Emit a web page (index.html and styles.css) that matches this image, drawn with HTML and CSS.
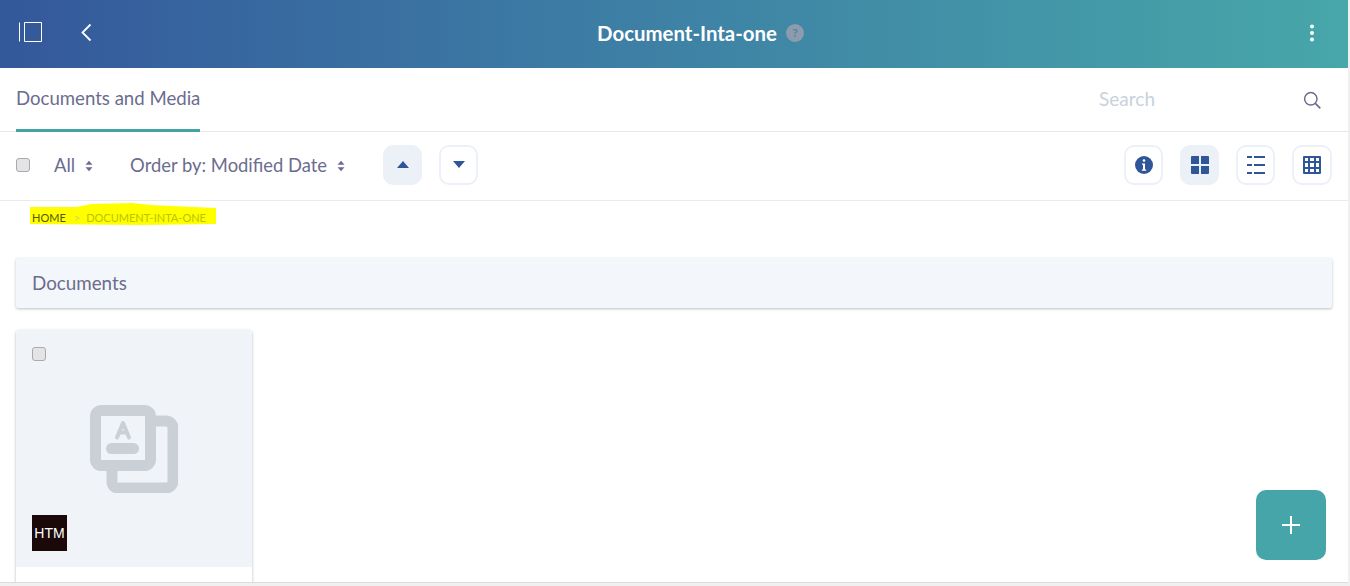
FILE: index.html
```html
<!DOCTYPE html>
<html lang="en">
<head>
<meta charset="utf-8">
<title>Document-Inta-one</title>
<link rel="stylesheet" href="styles.css">
</head>
<body>
<div class="page">
  <header class="topbar">
    <div class="topbar-left">
      <svg class="icon-panel" width="24" height="20" viewBox="0 0 24 20"><path d="M1.500 .5v19M6.500 .5h17v19h-17z" fill="none" stroke="#fff" stroke-width="1"/></svg>
      <svg class="icon-back" width="12" height="20" viewBox="0 0 12 20"><path d="M10.500 1.500 2.500 9.500l8 8" fill="none" stroke="#fff" stroke-width="1.800"/></svg>
    </div>
    <div class="topbar-title">
      <span class="title-text">Document-Inta-one</span>
      <span class="help">?</span>
    </div>
    <div class="topbar-right">
      <svg class="icon-more" width="6" height="18" viewBox="0 0 6 18"><circle cx="3" cy="2.500" r="2" fill="#fff"/><circle cx="3" cy="9" r="2" fill="#fff"/><circle cx="3" cy="15.500" r="2" fill="#fff"/></svg>
    </div>
  </header>

  <nav class="tabs">
    <a class="tab">Documents and Media</a>
    <div class="search">
      <span class="search-text">Search</span>
      <svg width="18" height="18" viewBox="0 0 18 18"><circle cx="7.800" cy="7.800" r="6.200" fill="none" stroke="#6b6c8e" stroke-width="1.500"/><path d="M12.300 12.300 17.300 17.300" stroke="#6b6c8e" stroke-width="1.700"/></svg>
    </div>
  </nav>

  <div class="toolbar">
    <input class="check" type="checkbox">
    <span class="select-label all">All<svg class="sort" width="8" height="12" viewBox="0 0 8 12"><path d="M4 .8 7.500 4.800H.5zM4 11.200.5 7.200h7z" fill="#6b6c8e"/></svg></span>
    <span class="select-label order">Order by: Modified Date<svg class="sort" width="8" height="12" viewBox="0 0 8 12"><path d="M4 .8 7.500 4.800H.5zM4 11.200.5 7.200h7z" fill="#6b6c8e"/></svg></span>
    <div class="btn active"><svg width="12" height="7" viewBox="0 0 12 7"><path d="M6 0 12 7H0z" fill="#30569a"/></svg></div>
    <div class="btn"><svg width="12" height="7" viewBox="0 0 12 7"><path d="M6 7 0 0h12z" fill="#30569a"/></svg></div>
    <div class="toolbar-right">
      <div class="btn"><svg width="18" height="18" viewBox="0 0 18 18"><circle cx="9" cy="9" r="9" fill="#30569a"/><circle cx="9" cy="4.500" r="1.300" fill="#fff"/><path d="M7 7.500h3v6h1.200v1.200H6.800v-1.200H8V8.700H7z" fill="#fff"/></svg></div>
      <div class="btn active"><svg width="18" height="18" viewBox="0 0 18 18"><path d="M0 1a1 1 0 0 1 1-1h7v8H0zM10 0h7a1 1 0 0 1 1 1v7h-8zM0 10h8v8H1a1 1 0 0 1-1-1zM10 10h8v7a1 1 0 0 1-1 1h-7z" fill="#30569a"/></svg></div>
      <div class="btn"><svg width="18" height="18" viewBox="0 0 18 18"><path d="M0 0h5v2H0zM7 0h11v2H7zM0 8h5v2H0zM7 8h11v2H7zM0 16h5v2H0zM7 16h11v2H7z" fill="#30569a"/></svg></div>
      <div class="btn btn-wide"><svg width="18" height="18" viewBox="0 0 18 18"><path fill-rule="evenodd" d="M1 0h16a1 1 0 0 1 1 1v16a1 1 0 0 1-1 1H1a1 1 0 0 1-1-1V1a1 1 0 0 1 1-1zM2 2v3h3V2zM7 2v3h4V2zM13 2v3h3V2zM2 7v4h3V7zM7 7v4h4V7zM13 7v4h3V7zM2 13v3h3v-3zM7 13v3h4v-3zM13 13v3h3v-3z" fill="#30569a"/></svg></div>
    </div>
  </div>

  <div class="crumbs">
    <span class="crumb-mark"><span class="crumb-home">HOME</span><span class="crumb-sep">&gt;</span><span class="crumb-cur">DOCUMENT-INTA-ONE</span></span>
  </div>

  <main class="content">
    <div class="section">Documents</div>
    <article class="card">
      <div class="thumb">
        <input class="check" type="checkbox">
        <svg class="doc-icon" width="88" height="88" viewBox="0 0 88 88">
          <path d="M66 16h10a7 7 0 0 1 7 7v53a7 7 0 0 1-7 7H28a6 6 0 0 1-6-6V60" fill="none" stroke="#cbd0d7" stroke-width="11"/>
          <rect x="5.500" y="5.500" width="55" height="55" rx="6" fill="none" stroke="#cbd0d7" stroke-width="11"/>
          <rect x="16" y="38" width="33" height="11" rx="5.500" fill="#cbd0d7"/>
          <path d="M27 32.500 33 18l6 14.500M29.500 27.500h7" fill="none" stroke="#cbd0d7" stroke-width="4" stroke-linecap="round" stroke-linejoin="round"/>
        </svg>
        <div class="badge"><span>HTM</span></div>
      </div>
    </article>
  </main>

  <button class="fab" type="button"><svg width="18" height="18" viewBox="0 0 18 18"><path d="M9 0v18M0 9h18" stroke="#fff" stroke-width="2"/></svg></button>
</div>
</body>
</html>
```
FILE: styles.css
```css
* { box-sizing: border-box; }
html, body { margin: 0; height: 100%; overflow: hidden; }
body {
  background: #f0f0f0;
  font-family: "Lato", "Open Sans", sans-serif;
  color: #6b6c8e;
}
.page {
  position: relative;
  width: 1348px;
  height: 583px;
  background: #fff;
  border-bottom: 1px solid #dcdcdc;
  overflow: hidden;
}
.topbar {
  height: 68px;
  display: grid;
  grid-template-columns: 1fr auto 1fr;
  align-items: center;
  padding: 0 33px 0 18px;
  background: linear-gradient(90deg, #34589b 0%, #3c7aa4 40%, #47a7a9 100%);
  color: #fff;
}
.topbar-left { display: flex; align-items: center; gap: 38px; }
.topbar-left svg { display: block; }
.icon-panel { margin-top: -4px; }
.icon-back { margin-top: -3px; }
.topbar-title {
  display: flex;
  align-items: center;
  gap: 9px;
  margin-top: -3px;
  padding-left: 68px;
}
.title-text { font-size: 20.400px; font-weight: 700; }
.help {
  width: 18px;
  height: 18px;
  border-radius: 50%;
  background: #8c9cad;
  color: #4e87a4;
  font-size: 12px;
  font-weight: 700;
  display: flex;
  align-items: center;
  justify-content: center;
}
.topbar-right { display: flex; justify-content: flex-end; }
.icon-more { display: block; margin-top: -3px; }
.tabs {
  height: 64px;
  display: flex;
  justify-content: space-between;
  padding: 0 27px 0 16px;
  border-bottom: 1px solid #e6e8ec;
}
.tab {
  height: 64px;
  font-size: 18.600px;
  line-height: 60px;
  border-bottom: 3px solid #45a3a8;
  white-space: nowrap;
}
.search { display: flex; align-items: center; gap: 148px; margin-top: -2px; }
.search-text { font-size: 19px; color: #c6d2de; }
.search svg { display: block; margin-top: 3px; }
.toolbar {
  height: 69px;
  display: flex;
  align-items: center;
  padding: 0 16px 3px;
  border-bottom: 1px solid #e9ebef;
}
.check {
  appearance: none;
  -webkit-appearance: none;
  display: block;
  width: 14px;
  height: 14px;
  margin: 0;
  background: #e4e4e6;
  border: 1px solid #a9a9ae;
  border-radius: 3px;
}
.select-label { display: flex; align-items: center; font-size: 18.400px; white-space: nowrap; }
.sort { margin-left: 10px; margin-top: 3px; display: block; }
.all { margin-left: 24px; }
.order { margin-left: 37px; }
.btn {
  width: 39px;
  height: 40px;
  border: 2px solid #ecf0f7;
  border-radius: 10px;
  background: #fff;
  display: flex;
  align-items: center;
  justify-content: center;
  flex: none;
}
.btn svg { display: block; }
.btn.active { background: #ecf0f7; }
.btn-wide { width: 40px; }
.order + .btn { margin-left: 38px; }
.btn + .btn { margin-left: 17px; }
.toolbar-right { margin-left: auto; display: flex; }
.crumbs { height: 57px; padding: 2px 0 0 30px; font-size: 11px; }
.crumb-mark {
  display: inline-flex;
  align-items: center;
  width: 186px;
  height: 22px;
  padding: 6px 0 0 2px;
  background: #ffff00;
  white-space: nowrap;
  clip-path: polygon(0 4px, 25% 4px, 33% 1px, 55% 0, 65% 2px, 100% 5px, 100% 21px, 60% 22px, 0 21px);
}
.crumb-home { color: #55550f; }
.crumb-sep { margin: 0 6px 0 8px; color: #d8d855; font-size: 11px; }
.crumb-cur { color: #b8c400; }
.content { padding: 0 16px; }
.section {
  height: 50px;
  line-height: 50px;
  padding-left: 16px;
  font-size: 18.800px;
  background: #f3f6fa;
  border-radius: 2px;
  box-shadow: 0 1px 3px rgba(0, 0, 0, .25);
}
.card {
  width: 236px;
  height: 300px;
  margin-top: 22px;
  border-radius: 3px 3px 0 0;
  background: #fff;
  box-shadow: 0 1px 3px rgba(0, 0, 0, .3);
}
.thumb {
  position: relative;
  height: 237px;
  padding: 17px 16px 0;
  background: #f0f3f8;
  border-radius: 3px 3px 0 0;
}
.doc-icon { position: absolute; left: 74px; top: 75px; display: block; }
.badge {
  position: absolute;
  left: 16px;
  top: 185px;
  width: 35px;
  height: 36px;
  background: #1b0808;
  color: #fff;
  display: flex;
  align-items: center;
  justify-content: center;
  font-family: "Liberation Sans", sans-serif;
  font-size: 14px;
}
.fab {
  position: absolute;
  left: 1256px;
  top: 490px;
  width: 70px;
  height: 70px;
  padding: 0;
  border: 0;
  border-radius: 10px;
  background: #45a5a9;
  display: flex;
  align-items: center;
  justify-content: center;
}
.fab svg { display: block; }
```
